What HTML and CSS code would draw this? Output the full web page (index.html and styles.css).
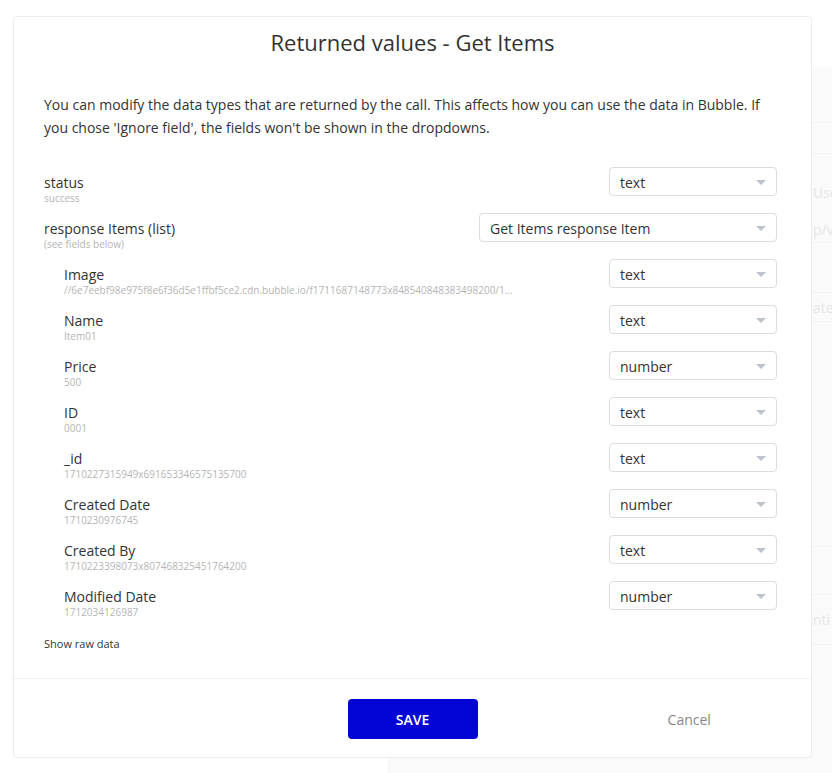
FILE: index.html
```html
<!DOCTYPE html>
<html lang="en">
<head>
    <meta charset="UTF-8">
    <meta name="viewport" content="width=device-width, initial-scale=1.0">
    <title>Returned values - Get Items</title>
    <link rel="stylesheet" href="styles.css">
</head>
<body>
    <!-- editor page behind the popup, barely visible -->
    <div class="backdrop">
        <div class="bg-panel">
            <div class="bg-row h56"></div>
            <div class="bg-row h31"></div>
            <div class="bg-row h89 top"><span>Use</span><span>p/v</span></div>
            <div class="bg-row h50"></div>
            <div class="bg-row h29"><span>ate</span></div>
            <div class="bg-row h225"></div>
            <div class="bg-row h48"></div>
            <div class="bg-row h50"><span>nti</span></div>
        </div>
    </div>

    <div class="modal">
        <div class="modal-header">
            <h1>Returned values - Get Items</h1>
        </div>

        <div class="modal-body">
            <p class="intro">You can modify the data types that are returned by the call. This affects how you can use the data in Bubble. If you chose 'Ignore field', the fields won't be shown in the dropdowns.</p>

            <div class="field-row">
                <div class="field-label">
                    <div class="name">status</div>
                    <div class="sample">success</div>
                </div>
                <div class="dropdown"><span>text</span><i class="caret"></i></div>
            </div>

            <div class="field-row">
                <div class="field-label">
                    <div class="name">response Items (list)</div>
                    <div class="sample">(see fields below)</div>
                </div>
                <div class="dropdown wide"><span>Get Items response Item</span><i class="caret"></i></div>
            </div>

            <div class="field-row nested">
                <div class="field-label">
                    <div class="name">Image</div>
                    <div class="sample">//6e7eebf98e975f8e6f36d5e1ffbf5ce2.cdn.bubble.io/f1711687148773x848540848383498200/1...</div>
                </div>
                <div class="dropdown"><span>text</span><i class="caret"></i></div>
            </div>

            <div class="field-row nested">
                <div class="field-label">
                    <div class="name">Name</div>
                    <div class="sample">Item01</div>
                </div>
                <div class="dropdown"><span>text</span><i class="caret"></i></div>
            </div>

            <div class="field-row nested">
                <div class="field-label">
                    <div class="name">Price</div>
                    <div class="sample">500</div>
                </div>
                <div class="dropdown"><span>number</span><i class="caret"></i></div>
            </div>

            <div class="field-row nested">
                <div class="field-label">
                    <div class="name">ID</div>
                    <div class="sample">0001</div>
                </div>
                <div class="dropdown"><span>text</span><i class="caret"></i></div>
            </div>

            <div class="field-row nested">
                <div class="field-label">
                    <div class="name">_id</div>
                    <div class="sample">1710227315949x691653346575135700</div>
                </div>
                <div class="dropdown"><span>text</span><i class="caret"></i></div>
            </div>

            <div class="field-row nested">
                <div class="field-label">
                    <div class="name">Created Date</div>
                    <div class="sample">1710230976745</div>
                </div>
                <div class="dropdown"><span>number</span><i class="caret"></i></div>
            </div>

            <div class="field-row nested">
                <div class="field-label">
                    <div class="name">Created By</div>
                    <div class="sample">1710223398073x807468325451764200</div>
                </div>
                <div class="dropdown"><span>text</span><i class="caret"></i></div>
            </div>

            <div class="field-row nested">
                <div class="field-label">
                    <div class="name">Modified Date</div>
                    <div class="sample">1712034126987</div>
                </div>
                <div class="dropdown"><span>number</span><i class="caret"></i></div>
            </div>

            <div class="raw-link">Show raw data</div>
        </div>

        <div class="modal-footer">
            <div></div>
            <button class="save-button">SAVE</button>
            <div class="cancel">Cancel</div>
        </div>
    </div>
</body>
</html>
```

FILE: styles.css
```css
body {
    font-family: 'Open Sans', 'Liberation Sans', sans-serif;
    background-color: #fff;
    color: #333;
    margin: 0;
    padding: 0;
    width: 832px;
    height: 773px;
    overflow: hidden;
}
.backdrop {
    height: 773px;
    padding-top: 67px;
    padding-left: 388px;
    box-sizing: border-box;
}
.bg-panel {
    height: 100%;
    background-color: #fafafa;
    border-left: 1px solid #f4f4f4;
}
.bg-row {
    box-sizing: border-box;
    border-bottom: 1px solid #f3f3f3;
    display: flex;
    flex-direction: column;
    justify-content: center;
    gap: 18px;
    padding-left: 424px;
    font-size: 14px;
    line-height: 19px;
    color: #e6e6e6;
    white-space: nowrap;
}
.bg-row.top {
    justify-content: flex-start;
    padding-top: 29px;
}
.h29 { height: 29px; }
.h31 { height: 31px; }
.h48 { height: 48px; }
.h50 { height: 50px; }
.h56 { height: 56px; }
.h89 { height: 89px; }
.h225 { height: 225px; }
.modal {
    position: absolute;
    left: 13px;
    top: 16px;
    width: 799px;
    height: 742px;
    box-sizing: border-box;
    background-color: #fff;
    border: 1px solid #ececec;
    border-radius: 4px;
    display: flex;
    flex-direction: column;
}
.modal-header {
    padding-top: 10px;
    text-align: center;
}
.modal-header h1 {
    margin: 0;
    font-size: 22px;
    font-weight: 400;
    line-height: 30px;
    color: #333;
}
.modal-body {
    flex: 1;
    padding: 0 34px 0 30px;
}
.intro {
    margin: 36px 0 28px;
    font-size: 14px;
    line-height: 23px;
    color: #333;
}
.field-row {
    display: flex;
    justify-content: space-between;
    align-items: flex-start;
    margin-bottom: 9px;
}
.field-label {
    padding-top: 6px;
}
.field-row.nested .field-label {
    padding-left: 20px;
}
.name {
    font-size: 14px;
    line-height: 19px;
    color: #333;
}
.sample {
    font-size: 10px;
    line-height: 12px;
    color: #b5b5b5;
    white-space: nowrap;
}
.dropdown {
    width: 168px;
    height: 29px;
    box-sizing: border-box;
    border: 1px solid #dcdcdc;
    border-radius: 4px;
    padding: 1px 10px 0;
    display: flex;
    align-items: center;
    font-size: 14px;
    color: #333;
}
.dropdown.wide {
    width: 298px;
}
.caret {
    margin-left: auto;
    width: 0;
    height: 0;
    border-left: 5px solid transparent;
    border-right: 5px solid transparent;
    border-top: 5px solid #bcc3ca;
}
.raw-link {
    margin-top: 18px;
    font-size: 11px;
    line-height: 15px;
    color: #333;
}
.modal-footer {
    border-top: 1px solid #f1f1f1;
    padding: 20px 0 18px;
    display: grid;
    grid-template-columns: 1fr 130px 1fr;
    align-items: center;
}
.save-button {
    height: 40px;
    border: none;
    border-radius: 4px;
    background-color: #0205d3;
    color: #fff;
    font-family: inherit;
    font-size: 14px;
    font-weight: 600;
    cursor: pointer;
}
.cancel {
    padding-left: 90px;
    text-align: center;
    font-size: 14px;
    color: #888;
}
```
